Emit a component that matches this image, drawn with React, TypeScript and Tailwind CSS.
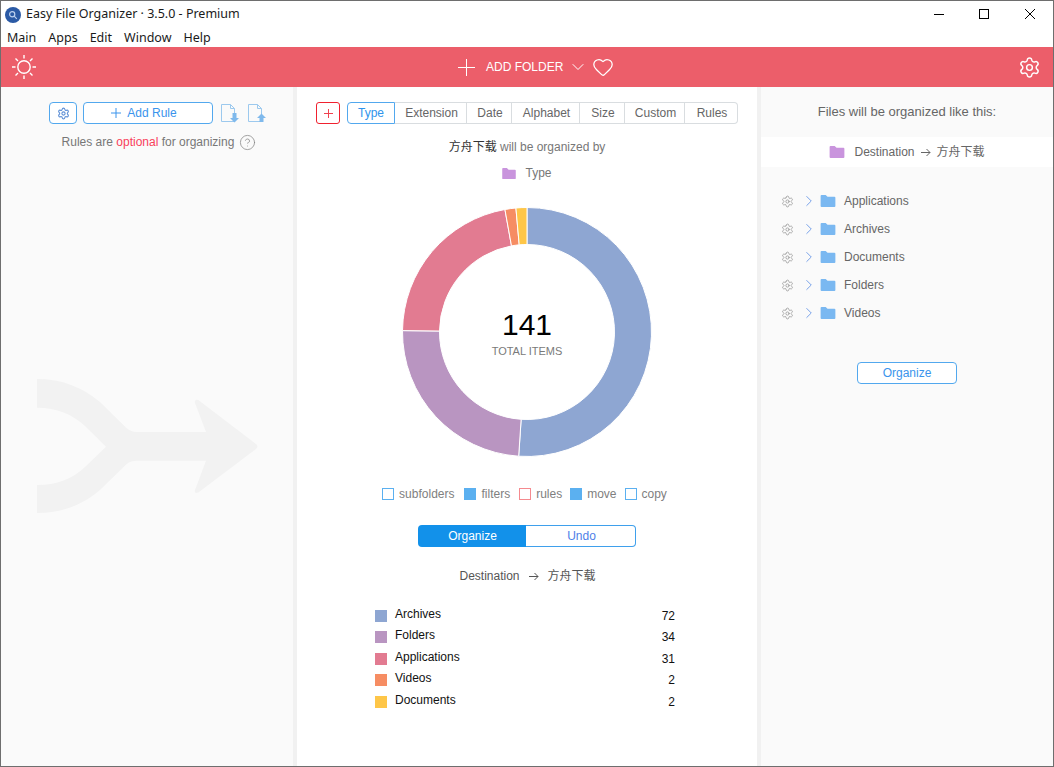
import { ChevronDown, ChevronRight, CircleHelp, Heart, Settings } from 'lucide-react';

const TABS = [
    { label: 'Type', width: 'w-[48px]' },
    { label: 'Extension', width: 'w-[72px]' },
    { label: 'Date', width: 'w-[45px]' },
    { label: 'Alphabet', width: 'w-[68px]' },
    { label: 'Size', width: 'w-[45px]' },
    { label: 'Custom', width: 'w-[60px]' },
    { label: 'Rules', width: 'w-[53px]' },
];

const SLICES = [
    { label: 'Archives', value: 72, color: '#8ea6d2' },
    { label: 'Folders', value: 34, color: '#b995c1' },
    { label: 'Applications', value: 31, color: '#e27b91' },
    { label: 'Videos', value: 2, color: '#f68d63' },
    { label: 'Documents', value: 2, color: '#fec648' },
];

const TREE = ['Applications', 'Archives', 'Documents', 'Folders', 'Videos'];

function slicePath(start: number, end: number) {
    const c = 125;
    const R = 124.5;
    const r = 87.5;
    const pt = (rad: number, a: number) => `${c + rad * Math.sin(a)} ${c - rad * Math.cos(a)}`;
    const large = end - start > Math.PI ? 1 : 0;
    return `M${pt(R, start)} A${R} ${R} 0 ${large} 1 ${pt(R, end)} L${pt(r, end)} A${r} ${r} 0 ${large} 0 ${pt(r, start)} Z`;
}

function Donut() {
    const total = SLICES.reduce((sum, s) => sum + s.value, 0);
    let angle = 0;
    return (
        <div className="relative w-[250px] h-[250px]">
            <svg width="250" height="250" viewBox="0 0 250 250">
                {SLICES.map((s) => {
                    const start = angle;
                    angle += (s.value / total) * Math.PI * 2;
                    return <path key={s.label} d={slicePath(start, angle)} fill={s.color} stroke="#fff" strokeWidth="1" />;
                })}
            </svg>
            <div className="absolute inset-0 flex flex-col items-center justify-center">
                <div className="text-[30px] leading-[36px] text-black mt-[1px]">141</div>
                <div className="text-[11px] leading-[14px] text-[#7a7a7a] mt-[1px]">TOTAL ITEMS</div>
            </div>
        </div>
    );
}

function Cross({ size, className }: { size: number; className?: string }) {
    return (
        <svg className={className} width={size} height={size} viewBox={`0 0 ${size} ${size}`}>
            <path d={`M${size / 2} 0 V${size} M0 ${size / 2} H${size}`} stroke="currentColor" strokeWidth="1" />
        </svg>
    );
}

function ArrowGlyph({ className }: { className?: string }) {
    return (
        <svg className={className} width="10" height="9" viewBox="0 0 10 9" fill="none">
            <path d="M0 4.5 H9 M5.5 1 L9 4.5 L5.5 8" stroke="currentColor" strokeWidth="1" />
        </svg>
    );
}

function SunGlyph() {
    return (
        <svg className="ml-[11px]" width="24" height="24" viewBox="0 0 24 24" fill="none" stroke="#fff" strokeWidth="1.4">
            <circle cx="12" cy="12" r="6.2" />
            <path d="M12 0 V3.5 M12 20.5 V24 M0 12 H3.5 M20.5 12 H24 M3.5 3.5 L6 6 M18 18 L20.5 20.5 M20.5 3.5 L18 6 M6 18 L3.5 20.5" />
        </svg>
    );
}

function FolderIcon({ color, className }: { color: string; className: string }) {
    return (
        <svg className={className} viewBox="0 0 16 13">
            <path d="M0 1 Q0 0 1 0 H5.5 L7.5 2 H15 Q16 2 16 3 V12 Q16 13 15 13 H1 Q0 13 0 12 Z" fill={color} />
        </svg>
    );
}

function FileArrow({ up }: { up?: boolean }) {
    return (
        <svg width="20" height="20" viewBox="0 0 20 20" fill="none">
            <path d="M1.5 1.5 H10.5 L14.5 5.5 V18.5 H1.5 Z M10.5 1.5 V5.5 H14.5" stroke="#9cc9ee" strokeWidth="1" />
            {up ? (
                <path d="M14.5 10.5 L19 15 H16.5 V19 H12.5 V15 H10 Z" fill="#7fb9ec" />
            ) : (
                <path d="M12.5 10 H16.5 V15 H19 L14.5 19.5 L10 15 H12.5 Z" fill="#7fb9ec" />
            )}
        </svg>
    );
}

function WindowBar() {
    return (
        <div className="h-[27px] flex items-center bg-white">
            <div className="ml-[4px] w-[16px] h-[16px] rounded-full bg-[#2b5aa5] flex items-center justify-center">
                <svg width="10" height="10" viewBox="0 0 10 10" fill="none">
                    <circle cx="4.2" cy="4.2" r="2.6" stroke="#bcd0ee" strokeWidth="1.2" />
                    <path d="M6.2 6.2 L8.8 8.8" stroke="#bcd0ee" strokeWidth="1.2" />
                </svg>
            </div>
            <div className="ml-[5px] text-[12.5px] text-[#1a1a1a] font-['Noto_Sans',sans-serif]">
                Easy File Organizer · 3.5.0 - Premium
            </div>
            <div className="ml-auto flex items-center mt-[-1px]">
                <svg className="mr-[35px]" width="10" height="10" viewBox="0 0 10 10">
                    <path d="M0 5.5 H10" stroke="#000" strokeWidth="1" />
                </svg>
                <svg className="mr-[36px]" width="10" height="10" viewBox="0 0 10 10" fill="none">
                    <rect x="0.5" y="0.5" width="9" height="9" stroke="#000" strokeWidth="1" />
                </svg>
                <svg className="mr-[18px]" width="10" height="10" viewBox="0 0 10 10">
                    <path d="M0 0 L10 10 M10 0 L0 10" stroke="#000" strokeWidth="1" />
                </svg>
            </div>
        </div>
    );
}

function MenuBar() {
    return (
        <div className="h-[19px] pt-[1px] flex items-center pl-[6px] gap-[12px] bg-white text-[12.5px] text-[#1a1a1a] font-['Noto_Sans',sans-serif]">
            {['Main', 'Apps', 'Edit', 'Window', 'Help'].map((m) => (
                <span key={m}>{m}</span>
            ))}
        </div>
    );
}

function RedBar() {
    return (
        <div className="h-[40px] bg-[#ec5e6a] flex items-center text-white relative">
            <SunGlyph />
            <div className="absolute left-[457px] top-0 h-[40px] flex items-center">
                <Cross size={17} />
                <span className="ml-[11px] text-[12px]">ADD FOLDER</span>
                <ChevronDown className="ml-[5px] w-[20px] h-[20px]" strokeWidth={1.2} />
                <Heart className="ml-[4px] w-[22px] h-[22px]" strokeWidth={1.4} />
            </div>
            <Settings className="ml-auto mr-[12px] w-[23px] h-[23px]" strokeWidth={1.5} />
        </div>
    );
}

function LeftPanel() {
    return (
        <div className="w-[292px] bg-[#fafafa] flex flex-col">
            <div className="mt-[15px] ml-[48px] flex items-center">
                <button className="w-[28px] h-[22px] rounded-[4px] border border-[#52a8ee] bg-white flex items-center justify-center">
                    <Settings className="w-[13px] h-[13px] text-[#5d8fd6]" strokeWidth={2} />
                </button>
                <button className="ml-[6px] pr-[8px] w-[130px] h-[22px] rounded-[4px] border border-[#52a8ee] bg-white flex items-center justify-center text-[12px] text-[#3a94ec]">
                    <Cross size={10} className="mr-[6px]" />
                    Add Rule
                </button>
                <div className="ml-[7px]">
                    <FileArrow />
                </div>
                <div className="ml-[7px]">
                    <FileArrow up />
                </div>
            </div>
            <div className="mt-[10px] ml-[24px] h-[16px] flex items-center justify-center text-[12px] text-[#777]">
                Rules are&nbsp;<span className="text-[#f8415a]">optional</span>&nbsp;for organizing
                <CircleHelp className="ml-[5px] w-[17px] h-[17px] text-[#888]" strokeWidth={1.1} />
            </div>
            <svg className="mt-[229px] ml-[36px]" width="222" height="136" viewBox="0 0 222 136">
                <path
                    d="M0 0 C25 0 45 8 63 23 L89.7 49.3 Q94 53 99.7 53 H169 L158 24 Q157 20 161.3 21 L219 65 Q222 67.5 219 70 L161.3 113.5 Q157 115 158 111 L169 81.7 H99.7 Q94 81.7 89.7 85 L63 111 C45 126 25 134 0 134 V106 C20 106 35 100 48 88 L69 67.7 L48 47 C35 35 20 28.7 0 28.7 Z"
                    fill="#f2f2f2"
                />
            </svg>
        </div>
    );
}

function CenterPanel() {
    return (
        <div className="w-[460px] bg-white flex flex-col items-center">
            <div className="mt-[15px] w-full pl-[19px] flex items-center">
                <button className="w-[24px] h-[22px] rounded-[3px] border border-[#f0212f] flex items-center justify-center text-[#f0424f]">
                    <Cross size={9} />
                </button>
                <div className="ml-[7px] h-[22px] flex text-[12px] text-[#666]">
                    {TABS.map((t, i) => (
                        <div
                            key={t.label}
                            className={`${t.width} flex items-center justify-center border ${
                                i === 0
                                    ? 'border-[#52a8ee] text-[#2f94ec] rounded-l-[4px]'
                                    : `pl-[2px] border-[#d9dde0] border-l-0 ${i === 1 ? 'pl-0' : ''} ${i === TABS.length - 1 ? 'rounded-r-[4px]' : ''}`
                            }`}
                        >
                            {t.label}
                        </div>
                    ))}
                </div>
            </div>
            <div className="mt-[15px] h-[16px] flex items-center text-[12px] text-[#777]">
                <span className="text-[#333] font-['Liberation_Sans','Noto_Sans_CJK_SC',sans-serif]">方舟下载</span>
                &nbsp;will be organized by
            </div>
            <div className="mt-[10px] h-[16px] flex items-center text-[12px] text-[#777]">
                <FolderIcon color="#c994dd" className="w-[14px] h-[11px]" />
                <span className="ml-[9px]">Type</span>
            </div>
            <div className="mt-[26px]">
                <Donut />
            </div>
            <div className="mt-[29px] mr-[5px] h-[16px] flex items-center text-[12px] text-[#808080]">
                <span className="w-[12px] h-[12px] border border-[#5bb0f0]" />
                <span className="ml-[5px]">subfolders</span>
                <span className="ml-[10px] w-[12px] h-[12px] bg-[#5bb0f0]" />
                <span className="ml-[5px]">filters</span>
                <span className="ml-[9px] w-[12px] h-[12px] border border-[#f58a8f]" />
                <span className="ml-[5px]">rules</span>
                <span className="ml-[8px] w-[12px] h-[12px] bg-[#5bb0f0]" />
                <span className="ml-[5px]">move</span>
                <span className="ml-[8px] w-[12px] h-[12px] border border-[#5bb0f0]" />
                <span className="ml-[5px]">copy</span>
            </div>
            <div className="mt-[23px] w-[218px] h-[22px] flex text-[12px]">
                <div className="w-[108px] pl-[1px] rounded-l-[4px] bg-[#1291ea] text-white flex items-center justify-center">
                    Organize
                </div>
                <div className="w-[110px] pl-[2px] rounded-r-[4px] border border-l-0 border-[#3fa0ec] text-[#4f7fe8] flex items-center justify-center">
                    Undo
                </div>
            </div>
            <div className="mt-[21px] pl-[1px] h-[16px] flex items-center text-[12px] text-[#555]">
                Destination
                <ArrowGlyph className="mx-[9px]" />
                <span className="font-['Liberation_Sans','Noto_Sans_CJK_SC',sans-serif]">方舟下载</span>
            </div>
            <div className="mt-[21px] mr-[4px] w-[300px] flex flex-col text-[12px] text-[#111]">
                {SLICES.map((s) => (
                    <div key={s.label} className="h-[21.5px] flex items-center">
                        <span className="w-[12px] h-[12px]" style={{ backgroundColor: s.color }} />
                        <span className="ml-[8px] mt-[-4px]">{s.label}</span>
                        <span className="ml-auto">{s.value}</span>
                    </div>
                ))}
            </div>
        </div>
    );
}

function RightPanel() {
    return (
        <div className="w-[292px] bg-[#fafafa] flex flex-col">
            <div className="h-[50px] flex items-center justify-center text-[13px] text-[#666]">
                Files will be organized like this:
            </div>
            <div className="h-[30px] bg-white flex items-center justify-center text-[12px] text-[#666]">
                <FolderIcon color="#c994dd" className="w-[16px] h-[12px]" />
                <span className="ml-[9px]">Destination</span>
                <ArrowGlyph className="mx-[6px]" />
                <span className="font-['Liberation_Sans','Noto_Sans_CJK_SC',sans-serif]">方舟下载</span>
            </div>
            <div className="mt-[20px] pl-[20px] flex flex-col">
                {TREE.map((name) => (
                    <div key={name} className="h-[28px] flex items-center text-[12px] text-[#666]">
                        <Settings className="w-[13px] h-[13px] text-[#999]" strokeWidth={1.5} />
                        <ChevronRight className="ml-[6px] w-[18px] h-[18px] text-[#5d8fe6]" strokeWidth={1.1} />
                        <FolderIcon color="#7ab8f1" className="ml-[2px] w-[16px] h-[12px]" />
                        <span className="ml-[8px]">{name}</span>
                    </div>
                ))}
            </div>
            <button className="mt-[35px] ml-[96px] w-[100px] h-[22px] rounded-[4px] border border-[#52a8ee] bg-white text-[12px] text-[#3a94ec] flex items-center justify-center">
                Organize
            </button>
        </div>
    );
}

export default function App() {
    return (
        <div className="w-[1054px] h-[767px] border border-[#6e6e6e] flex flex-col bg-white overflow-hidden font-['Liberation_Sans',sans-serif]">
            <WindowBar />
            <MenuBar />
            <RedBar />
            <div className="flex-1 flex gap-[4px] bg-[#f1f1f1] overflow-hidden">
                <LeftPanel />
                <CenterPanel />
                <RightPanel />
            </div>
        </div>
    );
}
